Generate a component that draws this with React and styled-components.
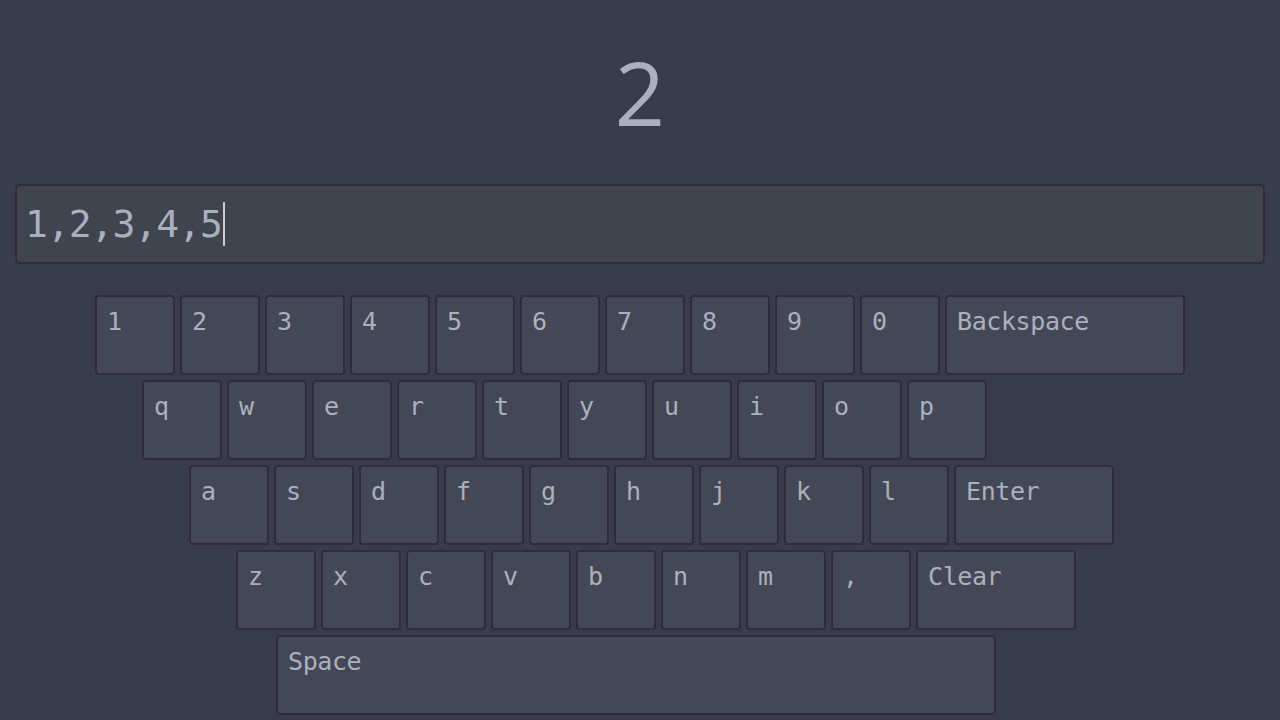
import React from "react";
import styled, { createGlobalStyle } from "styled-components";

const GlobalStyle = createGlobalStyle`
  body {
    margin: 0;
    background-color: #393c4a;
    color: #aab0be;
    font-family: "DejaVu Sans Mono", "Liberation Mono", monospace;
  }
`;

const rows = [
  { indent: 80, keys: ["1", "2", "3", "4", "5", "6", "7", "8", "9", "0", "Backspace"] },
  { indent: 127, keys: ["q", "w", "e", "r", "t", "y", "u", "i", "o", "p"] },
  { indent: 174, keys: ["a", "s", "d", "f", "g", "h", "j", "k", "l", "Enter"] },
  { indent: 221, keys: ["z", "x", "c", "v", "b", "n", "m", ",", "Clear"] },
  { indent: 261, keys: ["Space"] },
];

const widths = { Backspace: 240, Enter: 160, Clear: 160, Space: 720 };

export default function App() {
  return (
    <Page>
      <GlobalStyle />
      <Display>2</Display>
      <InputBox>
        <span>1,2,3,4,5</span>
        <Caret />
      </InputBox>
      <Keyboard>
        {rows.map((row, i) => (
          <Row key={i} indent={row.indent}>
            {row.keys.map((k) => (
              <Key key={k} width={widths[k] || 80}>
                {k}
              </Key>
            ))}
          </Row>
        ))}
      </Keyboard>
    </Page>
  );
}

const Page = styled.div`
  padding: 0 15px;
  height: 720px;
  box-sizing: border-box;
  overflow: hidden;
`;

const Display = styled.div`
  height: 184px;
  display: flex;
  align-items: center;
  justify-content: center;
  font-family: "Open Sans", "Noto Sans", sans-serif;
  font-size: 88px;
  color: #aab0be;
`;

const InputBox = styled.div`
  height: 80px;
  box-sizing: border-box;
  border: 2px solid #2c2f3a;
  border-radius: 4px;
  background-color: #40444f;
  display: flex;
  align-items: center;
  padding-left: 8px;
  font-size: 38px;
  letter-spacing: -1px;
  color: #aab0be;
`;

const Caret = styled.span`
  display: inline-block;
  width: 0;
  height: 44px;
  border-left: 2px solid #c8ccd6;
  margin-left: 1px;
`;

const Keyboard = styled.div`
  margin-top: 31px;
  display: flex;
  flex-direction: column;
  gap: 5px;
`;

const Row = styled.div`
  display: flex;
  gap: 5px;
  margin-left: ${(props) => props.indent}px;
`;

const Key = styled.div`
  width: ${(props) => props.width}px;
  height: 80px;
  box-sizing: border-box;
  flex-shrink: 0;
  border: 2px solid #2c2f3a;
  border-radius: 4px;
  background-color: #444856;
  padding: 10px 0 0 10px;
  font-size: 25px;
  letter-spacing: -0.4px;
  line-height: 1.2;
  color: #aab0be;
`;
